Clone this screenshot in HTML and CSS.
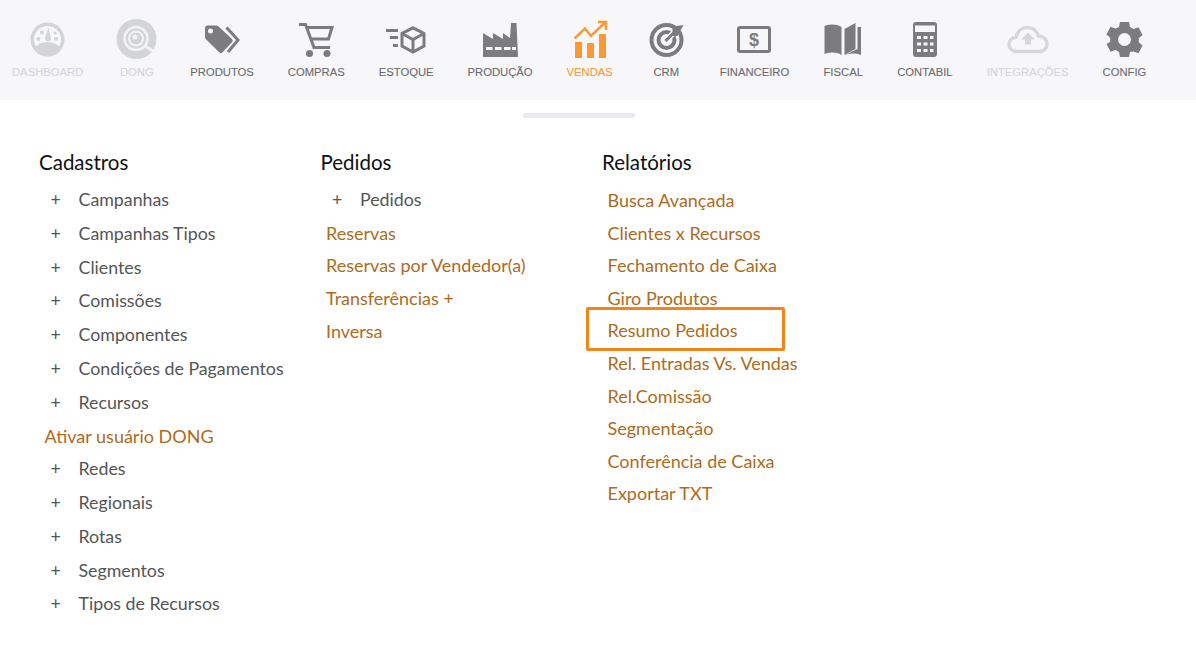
FILE: index.html
```html
<!DOCTYPE html>
<html lang="pt-BR">
<head>
<meta charset="utf-8">
<title>Vendas</title>
<link rel="stylesheet" href="styles.css">
</head>
<body>
<nav class="topbar">
  <a class="nav-item muted">
    <svg class="icon" width="35" height="40" viewBox="0 0 35 40"><circle cx="17.5" cy="20.5" r="17" fill="#d3d4d6"/><circle cx="17.5" cy="20.5" r="13.5" fill="#f7f7f9"/><path d="M4 29c4-4 8-6 13.5-6S27 25 31 29l-4 6H8z" fill="#d3d4d6"/><circle cx="8.5" cy="20" r="2" fill="#d3d4d6"/><circle cx="12" cy="13.5" r="2" fill="#d3d4d6"/><circle cx="26" cy="20" r="2" fill="#d3d4d6"/><circle cx="25" cy="14" r="1.6" fill="#d3d4d6"/><path d="M18.5 9l2 8.500a3 3 0 1 1-5 0z" fill="#d3d4d6"/></svg>
    <span>DASHBOARD</span>
  </a>
  <a class="nav-item muted">
    <svg class="icon" width="39" height="40" viewBox="0.500 0 39 40"><circle cx="20" cy="20" r="20" fill="#d3d4d6"/><circle cx="19.500" cy="19.500" r="11.500" fill="none" stroke="#f3f3f5" stroke-width="2.500"/><circle cx="19.500" cy="19.500" r="7" fill="none" stroke="#f3f3f5" stroke-width="2"/><circle cx="18.500" cy="18" r="2.500" fill="#f3f3f5"/><path d="M29 27l9 6" stroke="#f3f3f5" stroke-width="3"/></svg>
    <span>DONG</span>
  </a>
  <a class="nav-item">
    <svg class="icon" width="35" height="40" viewBox="0 0 35 40"><path fill-rule="evenodd" d="M0 9a2.500 2.500 0 0 1 2.500-2.500H11a4 4 0 0 1 2.800 1.200L27 20a2.300 2.300 0 0 1 0 3.300L17.500 33.300a2.300 2.300 0 0 1-3.300 0L1.200 20.500A4 4 0 0 1 0 17.500zM5.500 9.500a2.500 2.500 0 1 0 0 5 2.500 2.500 0 0 0 0-5z" fill="#7c7c7e"/><path d="M21.500 8.500L33 21 23 33" fill="none" stroke="#7c7c7e" stroke-width="3"/></svg>
    <span>PRODUTOS</span>
  </a>
  <a class="nav-item">
    <svg class="icon" width="35" height="40" viewBox="0 0 35 40"><path d="M0 5.500h6.500L15 28.500h16M8 8.500h25L29.500 20H11.500" fill="none" stroke="#7c7c7e" stroke-width="3"/><circle cx="10.500" cy="34.500" r="3.500" fill="#7c7c7e"/><circle cx="28" cy="34.500" r="3.500" fill="#7c7c7e"/></svg>
    <span>COMPRAS</span>
  </a>
  <a class="nav-item">
    <svg class="icon" width="40" height="40" viewBox="0 0 40 40"><path d="M0 11.500h12M4 18.500h8M7 26.500h5" stroke="#7c7c7e" stroke-width="3" fill="none"/><path d="M27 8.800l11 5.700v12.500L27 33 16 27V14.500zM16 14.500L27 20.500 38 14.500M27 20.500V33" fill="none" stroke="#7c7c7e" stroke-width="3"/></svg>
    <span>ESTOQUE</span>
  </a>
  <a class="nav-item">
    <svg class="icon" width="35" height="40" viewBox="0 0 35 40"><path d="M0 14l10 6v-6l10 6v-6l7 5L28 4h5.500L35 38H0z" fill="#7c7c7e"/><path d="M3 29.500h6.500M12 29.500h6.500M21 29.500h6.500M29 29.500h4" stroke="#f7f7f9" stroke-width="3" fill="none"/></svg>
    <span>PRODUÇÃO</span>
  </a>
  <a class="nav-item active">
    <svg class="icon" width="34" height="40" viewBox="0 0 34 40"><path d="M2 23h7v16H2zM14 24h7v15h-7zM26 15h7v24h-7z" fill="#f99b32"/><path d="M1.500 19.500L12 9.500l6 7.500L32 3.500M25 3h8v8" fill="none" stroke="#f99b32" stroke-width="2.500"/></svg>
    <span>VENDAS</span>
  </a>
  <a class="nav-item">
    <svg class="icon" width="39" height="40" viewBox="-2.500 0 39 40"><circle cx="17" cy="21" r="15" fill="none" stroke="#7c7c7e" stroke-width="4"/><circle cx="17" cy="21" r="8" fill="none" stroke="#7c7c7e" stroke-width="4"/><path d="M15 23L31 7" stroke="#f7f7f9" stroke-width="6"/><path d="M16 22L27 11" stroke="#7c7c7e" stroke-width="3"/><path d="M23 15V7.500L34 6l-6 11h-5z" fill="#7c7c7e"/></svg>
    <span>CRM</span>
  </a>
  <a class="nav-item">
    <svg class="icon" width="35" height="40" viewBox="0 0 35 40"><rect x="1.500" y="8.500" width="31" height="24" rx="1.500" fill="none" stroke="#7c7c7e" stroke-width="3"/><text class="dollar" x="17" y="26.500" text-anchor="middle">$</text></svg>
    <span>FINANCEIRO</span>
  </a>
  <a class="nav-item">
    <svg class="icon" width="40" height="40" viewBox="-0.500 0 40 40"><path d="M1 7c6-2 12-2 17 1v28c-5-3-11-3-17-1z" fill="#7c7c7e"/><path d="M21 10l11-6v26l-11 6z" fill="#7c7c7e"/><path d="M34 8h3.500v28c-6-2-12-2-17 1 3-2 9-5 13.500-7z" fill="#7c7c7e"/></svg>
    <span>FISCAL</span>
  </a>
  <a class="nav-item">
    <svg class="icon" width="24" height="40" viewBox="0 0 24 40"><rect width="24" height="35" y="3" rx="3" fill="#7c7c7e"/><rect x="2" y="6.500" width="20" height="6.500" fill="#f7f7f9"/><path d="M4 17h4v3H4zM10.500 17h4v3h-4zM17 17h3.500v3H17zM4 23.500h4v3H4zM10.500 23.500h4v3h-4zM17 23.500h3.500v3H17zM4 30h4v3H4zM10.500 30h4v3h-4zM17 30h3.500v3H17z" fill="#f7f7f9"/></svg>
    <span>CONTABIL</span>
  </a>
  <a class="nav-item muted">
    <svg class="icon" width="42" height="40" viewBox="0 0 42 40"><path d="M10 32.500C5 32.500 2 29 2 25.500c0-4 3-7 7-7.300C10.500 12 15 8.500 20.500 8.500c5 0 9.500 3 11 8.500 5-.2 8.500 3.500 8.500 8 0 4-3 7.500-8 7.500z" fill="none" stroke="#d8d8da" stroke-width="3.500"/><path d="M21 13.500l7 7h-4v5h-6v-5h-4z" fill="#d8d8da"/></svg>
    <span>INTEGRAÇÕES</span>
  </a>
  <a class="nav-item">
    <svg class="icon" width="35" height="40" viewBox="0 0 35 40"><path fill-rule="evenodd" fill="#7c7c7e" d="M13 3h9l1 5 3.500 2 5-1.700 4 7.700-3.700 3.300v4l3.700 3.300-4 7.700-5-1.700L23 33l-1 5h-9l-1-5-3.500-2-5 1.700-4-7.700L3.200 22.700v-4L-.5 15.400l4-7.700 5 1.700L12 8zM17.500 14a6.500 6.500 0 1 0 0 13 6.500 6.500 0 0 0 0-13z"/></svg>
    <span>CONFIG</span>
  </a>
</nav>
<div class="handle"></div>
<main class="columns">
  <section class="column">
    <h2>Cadastros</h2>
    <ul>
      <li class="add">Campanhas</li>
      <li class="add">Campanhas Tipos</li>
      <li class="add">Clientes</li>
      <li class="add">Comissões</li>
      <li class="add">Componentes</li>
      <li class="add">Condições de Pagamentos</li>
      <li class="add">Recursos</li>
      <li class="link">Ativar usuário DONG</li>
      <li class="add">Redes</li>
      <li class="add">Regionais</li>
      <li class="add">Rotas</li>
      <li class="add">Segmentos</li>
      <li class="add">Tipos de Recursos</li>
    </ul>
  </section>
  <section class="column">
    <h2>Pedidos</h2>
    <ul>
      <li class="add">Pedidos</li>
      <li class="link">Reservas</li>
      <li class="link">Reservas por Vendedor(a)</li>
      <li class="link">Transferências +</li>
      <li class="link">Inversa</li>
    </ul>
  </section>
  <section class="column reports">
    <h2>Relatórios</h2>
    <ul>
      <li class="link">Busca Avançada</li>
      <li class="link">Clientes x Recursos</li>
      <li class="link">Fechamento de Caixa</li>
      <li class="link">Giro Produtos</li>
      <li class="link marked">Resumo Pedidos</li>
      <li class="link">Rel. Entradas Vs. Vendas</li>
      <li class="link">Rel.Comissão</li>
      <li class="link">Segmentação</li>
      <li class="link">Conferência de Caixa</li>
      <li class="link">Exportar TXT</li>
    </ul>
  </section>
</main>
</body>
</html>
```
FILE: styles.css
```css
* { box-sizing: border-box; }
html, body { margin: 0; padding: 0; background: #fff; }
body { font-family: "Lato", sans-serif; overflow: hidden; }
.topbar {
  display: flex;
  gap: 34px;
  height: 100px;
  padding: 19px 0 0 12px;
  background: #f7f7f9;
}
.nav-item {
  display: flex;
  flex-direction: column;
  align-items: center;
  font: 11.250px/14px "Liberation Sans", Arial, sans-serif;
  -webkit-text-stroke: 0.1px currentColor;
  color: #6b6b6e;
}
.nav-item span { margin-top: 6px; white-space: nowrap; }
.icon { display: block; overflow: visible; }
.dollar { font: bold 18px "Liberation Sans", Arial, sans-serif; fill: #7c7c7e; }
.muted { color: #d5d5d8; }
.active { color: #f99b32; }
.handle {
  width: 112px;
  height: 5px;
  margin: 13px 0 0 523px;
  background: #e9e9f3;
  border-radius: 3px;
}
.columns {
  display: grid;
  grid-template-columns: 281.5px 281.5px 281.5px;
  padding: 32px 0 0 39px;
}
h2 {
  margin: 0;
  font-size: 20.5px;
  font-weight: 400;
  line-height: 24px;
  color: #111;
}
ul { list-style: none; margin: 9px 0 0; padding: 0; font-size: 17.800px; }
.add {
  position: relative;
  height: 33.8px;
  line-height: 33.8px;
  padding-left: 39.500px;
  color: #555;
}
.add::before {
  content: "+";
  position: absolute;
  left: 11.500px;
  color: #555;
}
.link {
  height: 32.6px;
  line-height: 33.500px;
  padding-left: 5.500px;
  color: #ad6b22;
  font-size: 18px;
}
.reports ul { margin-top: 10px; }
.marked { position: relative; }
.marked::after {
  content: "";
  position: absolute;
  left: -16px;
  top: -7px;
  width: 193px;
  height: 38px;
  border: 3px solid #f0861a;
  border-radius: 2px;
}
```
